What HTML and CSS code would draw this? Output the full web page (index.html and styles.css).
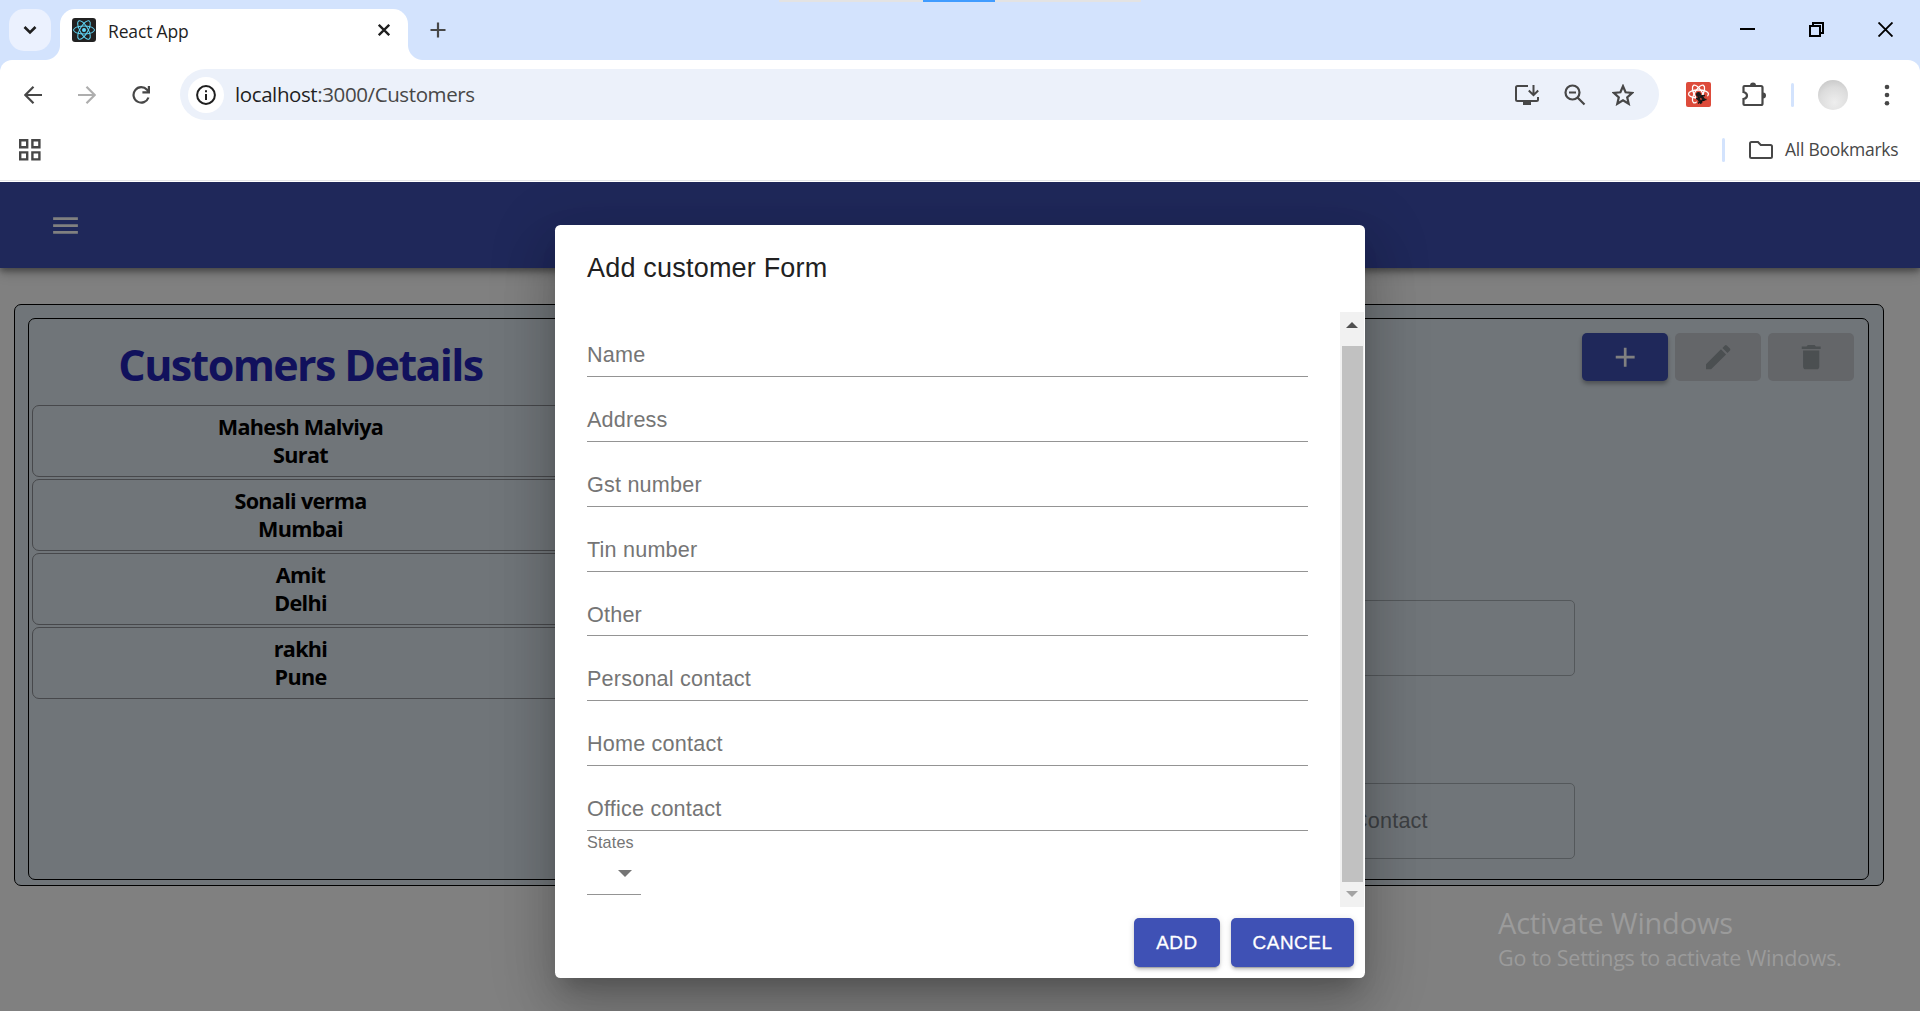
FILE: index.html
```html
<!DOCTYPE html>
<html lang="en">
<head>
<meta charset="utf-8">
<title>React App</title>
<link rel="stylesheet" href="styles.css">
</head>
<body>
<header class="browser">
  <div class="progress"><span></span></div>
  <div class="tabstrip">
    <div class="tab-search"><svg width="14" height="10" viewBox="0 0 14 10"><path d="M1.5 2l5.500 5.500L12.500 2" fill="none" stroke="#1f1f1f" stroke-width="2.600"/></svg></div>
    <div class="tab">
      <svg class="favicon" width="24" height="24" viewBox="0 0 24 24"><rect width="24" height="24" rx="3" fill="#212121"/><g fill="none" stroke="#61dafb" stroke-width="1"><ellipse cx="12" cy="12" rx="10.500" ry="4"/><ellipse cx="12" cy="12" rx="10.500" ry="4" transform="rotate(60 12 12)"/><ellipse cx="12" cy="12" rx="10.500" ry="4" transform="rotate(120 12 12)"/></g><circle cx="12" cy="12" r="2" fill="#61dafb"/></svg>
      <span class="tab-title">React App</span>
      <svg class="tab-close" width="12" height="12" viewBox="0 0 12 12"><path d="M.8 .8l10.400 10.400M11.200 .8L.8 11.200" stroke="#1f1f1f" stroke-width="2.300"/></svg>
    </div>
    <svg class="new-tab" width="16" height="16" viewBox="0 0 16 16"><path d="M8 .5v15M.5 8h15" stroke="#474747" stroke-width="2.200"/></svg>
    <div class="window-controls">
      <svg width="15" height="15" viewBox="0 0 15 15"><path d="M0 7h15" stroke="#000" stroke-width="2"/></svg>
      <svg width="15" height="15" viewBox="0 0 15 15"><path d="M1 4h10v10H1zM4 4V1h10v10h-3" fill="none" stroke="#000" stroke-width="2"/></svg>
      <svg width="15" height="15" viewBox="0 0 15 15"><path d="M.5 .5l14 14M14.500 .5l-14 14" stroke="#000" stroke-width="1.900"/></svg>
    </div>
  </div>
  <div class="toolbar">
    <div class="nav-icons">
      <svg width="18" height="18" viewBox="0 0 18 18"><path d="M18 9H1.500M9.500 .8L1.300 9l8.200 8.200" fill="none" stroke="#474747" stroke-width="2.200"/></svg>
      <svg width="18" height="18" viewBox="0 0 18 18"><path d="M0 9h16.500M8.500 .8L16.700 9l-8.200 8.200" fill="none" stroke="#aeaeae" stroke-width="2.200"/></svg>
      <svg width="20" height="18" viewBox="0 0 20 18"><path d="M16.500 11.500A7.700 7.700 0 1 1 15 3.800l2 2M16.900 0v6.300H10.400" fill="none" stroke="#474747" stroke-width="2.200"/></svg>
    </div>
    <div class="omnibox">
      <div class="info"><svg width="20" height="20" viewBox="0 0 20 20"><circle cx="10" cy="10" r="8.900" fill="none" stroke="#1f1f1f" stroke-width="2"/><path d="M10 9v6M10 5.200v2" stroke="#1f1f1f" stroke-width="2"/></svg></div>
      <div class="url"><b>localhost</b>:3000/Customers</div>
      <svg class="o1" width="24" height="22" viewBox="0 0 24 22"><path d="M13 2H2.500Q1 2 1 3.500v12Q1 17 2.500 17h19q1.500 0 1.500-1.500V13M18.500 1v10M13.800 6.500l4.700 4.700 4.700-4.700" fill="none" stroke="#474747" stroke-width="2"/><path d="M8 17h8v4H8z" fill="#474747"/></svg>
      <svg class="o2" width="22" height="22" viewBox="0 0 22 22"><circle cx="8.500" cy="8.500" r="7" fill="none" stroke="#474747" stroke-width="2.200"/><path d="M5 8.500h7M13.500 13.500l7 7" stroke="#474747" stroke-width="2.200"/></svg>
      <svg class="o3" width="22" height="22" viewBox="0 0 22 22"><path d="M11 2.200l2.600 6.100 6.600.6-5 4.400 1.500 6.500L11 16.300l-5.700 3.500 1.500-6.500-5-4.400 6.600-.6z" fill="none" stroke="#474747" stroke-width="2.200"/></svg>
    </div>
    <div class="actions">
      <svg width="25" height="25" viewBox="0 0 25 25"><rect width="25" height="25" rx="2" fill="#dd4b3b"/><g fill="none" stroke="#fff" stroke-width="1.300"><ellipse cx="12.500" cy="12" rx="10" ry="4"/><ellipse cx="12.500" cy="12" rx="10" ry="4" transform="rotate(60 12.500 12)"/><ellipse cx="12.500" cy="12" rx="10" ry="4" transform="rotate(120 12.500 12)"/></g><path d="M10 14l11-1 1 4-4 6-7 0z" fill="#dd4b3b"/><g stroke="#1b1b1b" stroke-width="1.400"><circle cx="12.500" cy="12.500" r="1.800" fill="#1b1b1b"/><path d="M11.500 15.500l4 6M15 13.500l3.500 5" stroke-width="2.600"/><path d="M10 16.500l3 .5 2-3 4-.5M12 21.500l2-2 3-2 3.500 0"/></g></svg>
      <svg class="puzzle" width="25" height="25" viewBox="0 0 25 25"><path d="M2.500 4H19q1.500 0 1.500 1.500V21.500q0 1.500-1.500 1.500H2.500q-1 0-1-1v-5q3.500-.8 3.500-3.500T1.500 10V5q0-1 1-1z" fill="none" stroke="#474747" stroke-width="2.200"/><path d="M8 3.500a3 3 0 0 1 6 0zM21 10.500a3 3 0 0 1 0 6z" fill="#474747"/></svg>
      <i class="sep"></i>
      <div class="avatar"></div>
      <svg width="6" height="24" viewBox="0 0 6 24"><g fill="#474747"><circle cx="3" cy="4" r="2.300"/><circle cx="3" cy="12" r="2.300"/><circle cx="3" cy="20.300" r="2.300"/></g></svg>
    </div>
  </div>
  <div class="bookmarks">
    <svg width="22" height="22" viewBox="0 0 22 22"><path d="M1.200 1.200h7v7h-7zM13.400 1.200h7v7h-7zM1.200 13.400h7v7h-7zM13.400 13.400h7v7h-7z" fill="none" stroke="#474747" stroke-width="2.400"/></svg>
    <div class="all"><i class="sep"></i><svg width="24" height="18" viewBox="0 0 24 18"><path d="M2.500 1H9l2.800 3H21.500Q23 4 23 5.500v10Q23 17 21.500 17h-19Q1 17 1 15.500v-13Q1 1 2.500 1z" fill="none" stroke="#474747" stroke-width="2"/></svg><span class="all-text">All Bookmarks</span></div>
  </div>
</header>
<main class="page">
  <nav class="appbar"><svg width="33" height="33" viewBox="0 0 24 24"><path d="M3 18h18v-2H3v2zm0-5h18v-2H3v2zm0-7v2h18V6H3z" fill="#808080"/></svg></nav>
  <section class="outer">
    <div class="inner">
      <div class="list">
        <h1>Customers Details</h1>
        <div class="item"><span>Mahesh Malviya</span><span>Surat</span></div>
        <div class="item"><span>Sonali verma</span><span>Mumbai</span></div>
        <div class="item"><span>Amit</span><span>Delhi</span></div>
        <div class="item"><span>rakhi</span><span>Pune</span></div>
      </div>
      <div class="details">
        <div class="tools">
          <div class="tool primary"><svg width="32.400" height="32.400" viewBox="0 0 24 24"><path d="M19 13h-6v6h-2v-6H5v-2h6V5h2v6h6v2z"/></svg></div>
          <div class="tool"><svg width="32.400" height="32.400" viewBox="0 0 24 24"><path d="M3 17.250V21h3.750L17.810 9.940l-3.750-3.750L3 17.250zM20.710 7.040c.39-.39.39-1.020 0-1.410l-2.340-2.340a.9959.9959 0 0 0-1.410 0l-1.830 1.830 3.750 3.750 1.830-1.830z"/></svg></div>
          <div class="tool"><svg width="32.400" height="32.400" viewBox="0 0 24 24"><path d="M6 19c0 1.100.9 2 2 2h8c1.100 0 2-.9 2-2V7H6v12zM19 4h-3.500l-1-1h-5l-1 1H5v2h14V4z"/></svg></div>
        </div>
        <div class="box box-a"></div>
        <div class="box box-b">Contact</div>
      </div>
    </div>
  </section>
  <div class="dialog">
    <h2>Add customer Form</h2>
    <div class="content">
      <div class="fields">
        <label class="field">Name</label>
        <label class="field">Address</label>
        <label class="field">Gst number</label>
        <label class="field">Tin number</label>
        <label class="field">Other</label>
        <label class="field">Personal contact</label>
        <label class="field">Home contact</label>
        <label class="field">Office contact</label>
        <label class="states">States</label>
        <div class="select"><svg width="14" height="7" viewBox="0 0 14 7"><path d="M0 0h14L7 7z" fill="#757575"/></svg></div>
      </div>
      <div class="scrollbar">
        <svg width="12" height="6" viewBox="0 0 12 6"><path d="M0 6h12L6 0z" fill="#505050"/></svg>
        <div class="thumb"></div>
        <svg width="12" height="6" viewBox="0 0 12 6"><path d="M0 0h12L6 6z" fill="#a3a3a3"/></svg>
      </div>
    </div>
    <div class="buttons"><div class="btn add">ADD</div><div class="btn cancel">CANCEL</div></div>
  </div>
  <div class="watermark"><span class="w1">Activate Windows</span><span class="w2">Go to Settings to activate Windows.</span></div>
</main>
</body>
</html>
```
FILE: styles.css
```css
* { box-sizing: border-box; }
body { margin: 0; width: 1920px; height: 1011px; overflow: hidden; background: #fff; font-family: "Open Sans", "Noto Sans", sans-serif; }
svg { display: block; flex: none; }
span, label, .url { white-space: nowrap; }

/* browser chrome */
.browser { position: relative; height: 182px; background: #fff; }
.progress { position: absolute; left: 779px; top: 0; width: 362px; height: 2px; background: #e3e3e3; }
.progress span { display: block; width: 72px; height: 2px; margin-left: 144px; background: #409cff; }
.tabstrip { height: 72px; padding: 9px 27px 0 9px; display: flex; background: #d3e3fd; }
.tab-search { width: 42px; height: 42px; border-radius: 15px; background: #ebf1fe; display: flex; align-items: center; justify-content: center; }
.tab { position: relative; width: 348px; height: 51px; margin-left: 9px; padding: 0 18px 0 12px; display: flex; background: #fff; border-radius: 15px 15px 0 0; }
.tab::before, .tab::after { content: ""; position: absolute; bottom: 0; width: 15px; height: 15px; }
.tab::before { left: -15px; background: radial-gradient(circle at 0 0, transparent 14.5px, #fff 15.5px); }
.tab::after { right: -15px; background: radial-gradient(circle at 100% 0, transparent 14.5px, #fff 15.5px); }
.favicon { margin-top: 9px; }
.tab-title { margin: 9px auto 0 12px; font-size: 17.5px; line-height: 26px; letter-spacing: -.15px; color: #1f1f1f; }
.tab-close { margin-top: 15px; }
.new-tab { margin: 13px auto 0 22px; }
.window-controls { display: flex; gap: 54px; padding-top: 13px; }
.toolbar { position: relative; height: 69px; margin-top: -12px; border-radius: 12px 12px 0 0; background: #fff; display: flex; align-items: center; }
.nav-icons { display: flex; gap: 36px; width: 180px; padding-left: 24px; padding-top: 1px; }
.omnibox { width: 1479px; height: 51px; border-radius: 26px; background: #ecf1fa; display: flex; align-items: center; padding-left: 8px; }
.info { width: 36px; height: 36px; border-radius: 50%; background: #fff; display: flex; align-items: center; justify-content: center; }
.url { margin: -1px auto 0 11px; font-size: 20.5px; letter-spacing: -.4px; color: #474747; }
.url b { font-weight: 400; color: #1f1f1f; }
.o1 { margin-right: 25px; }
.o2 { margin-right: 26px; }
.o3 { margin-right: 25px; }
.actions { flex: 1; display: flex; align-items: center; padding-left: 27px; }
.puzzle { margin: 0 24px 0 31px; }
.sep { width: 3px; height: 24px; border-radius: 2px; background: #d3e3fd; }
.avatar { width: 30px; height: 30px; margin: 0 36px 0 24px; border-radius: 50%; background: radial-gradient(circle at 55% 75%, #eee, #dcdcdc 55%, #bebebe); }
.bookmarks { height: 52px; border-bottom: 1px solid #e3e5e8; padding: 10px 22px 0 19px; display: flex; justify-content: space-between; }
.all { display: flex; height: 22px; align-items: center; }
.all svg { margin: 0 12px 0 24px; }
.all-text { width: 113px; margin-top: -2px; font-size: 17.5px; letter-spacing: -.25px; color: #474747; }

/* dimmed page */
.page { position: relative; height: 829px; background: #808080; display: flow-root; overflow: hidden; }
.appbar { height: 86px; padding: 27px 0 0 49px; background: #1f285a; box-shadow: 0 3px 6px rgba(0,0,0,.35), 0 5px 12px rgba(0,0,0,.2); }
.outer { width: 1870px; height: 582px; margin: 36px 0 0 14px; padding: 13px 14px 5px 13px; border: 1px solid #000; border-radius: 7px; background: #707579; }
.inner { height: 562px; border: 1px solid #000; border-radius: 7px; padding: 0 14px 0 3px; display: flex; }
.list { width: 537px; }
h1 { margin: 16px 0 10px; height: 60px; line-height: 60px; font-size: 43px; letter-spacing: -1.6px; text-align: center; color: #11115c; white-space: nowrap; }
.item { height: 72px; margin-bottom: 2px; padding-top: 7px; border: 1px solid #47484b; border-radius: 7px; font-size: 21.600px; font-weight: 700; line-height: 28px; letter-spacing: -.7px; color: #000; text-align: center; }
.item span { display: block; }
.details { flex: 1; }
.tools { display: flex; justify-content: flex-end; gap: 7px; padding-top: 14px; }
.tool { width: 86px; height: 48px; border-radius: 5px; background: #646669; display: flex; align-items: center; justify-content: center; fill: #4b4f51; }
.primary { background: #1f285a; fill: #808080; box-shadow: 0 3px 4px rgba(0,0,0,.3); }
.box { width: 314px; height: 76px; margin-left: 692px; border: 1px solid #54585b; border-radius: 5px; font: 21.600px/74px "Liberation Sans", sans-serif; color: #3d4043; padding-left: 90px; letter-spacing: .2px; }
.box-a { margin-top: 219px; }
.box-b { margin-top: 107px; }

/* dialog */
.dialog { position: absolute; left: 555px; top: 43px; width: 810px; height: 753px; border-radius: 5.400px; background: #fff; font-family: "Liberation Sans", Arial, sans-serif; box-shadow: 0 15px 20px -9px rgba(0,0,0,.2), 0 32px 51px 4px rgba(0,0,0,.14), 0 12px 62px 11px rgba(0,0,0,.12); }
h2 { margin: 0; height: 87px; padding: 22px 32px 0; font-weight: 400; font-size: 27px; line-height: 43px; letter-spacing: .2px; color: #212121; }
.content { height: 595px; display: flex; justify-content: space-between; padding-right: 1px; }
.fields { width: 753px; padding-left: 32px; }
.field { display: block; height: 64.900px; padding-top: 30px; border-bottom: 1px solid #949494; font-size: 21.600px; line-height: 26px; letter-spacing: .2px; color: #757575; }
.states { display: block; height: 22px; font-size: 16.200px; line-height: 22px; letter-spacing: .15px; color: #757575; }
.select { width: 54px; height: 42px; padding: 17px 0 0 31px; border-bottom: 1px solid #949494; }
.scrollbar { width: 24px; background: #f1f1f1; display: flex; flex-direction: column; align-items: center; padding: 10px 0; justify-content: space-between; }
.thumb { width: 21px; height: 536px; background: #c1c1c1; margin-top: 8px; }
.buttons { display: flex; justify-content: flex-end; gap: 11px; padding: 11px 11px 0; }
.btn { height: 49px; border-radius: 5px; background: #3f51b5; color: #fff; font-size: 18.900px; line-height: 49px; text-align: center; letter-spacing: .54px; -webkit-text-stroke: .3px #fff; box-shadow: 0 4px 1px -3px rgba(0,0,0,.2), 0 3px 3px rgba(0,0,0,.14), 0 1px 7px rgba(0,0,0,.12); }
.add { width: 86px; }
.cancel { width: 123px; }

/* operating system overlay */
.watermark { position: absolute; left: 1498px; top: 721px; display: flex; flex-direction: column; color: #9b9b9b; }
.w1 { font-size: 29px; line-height: 40px; letter-spacing: -.2px; }
.w2 { font-size: 21.500px; line-height: 30px; letter-spacing: -.25px; }
```
